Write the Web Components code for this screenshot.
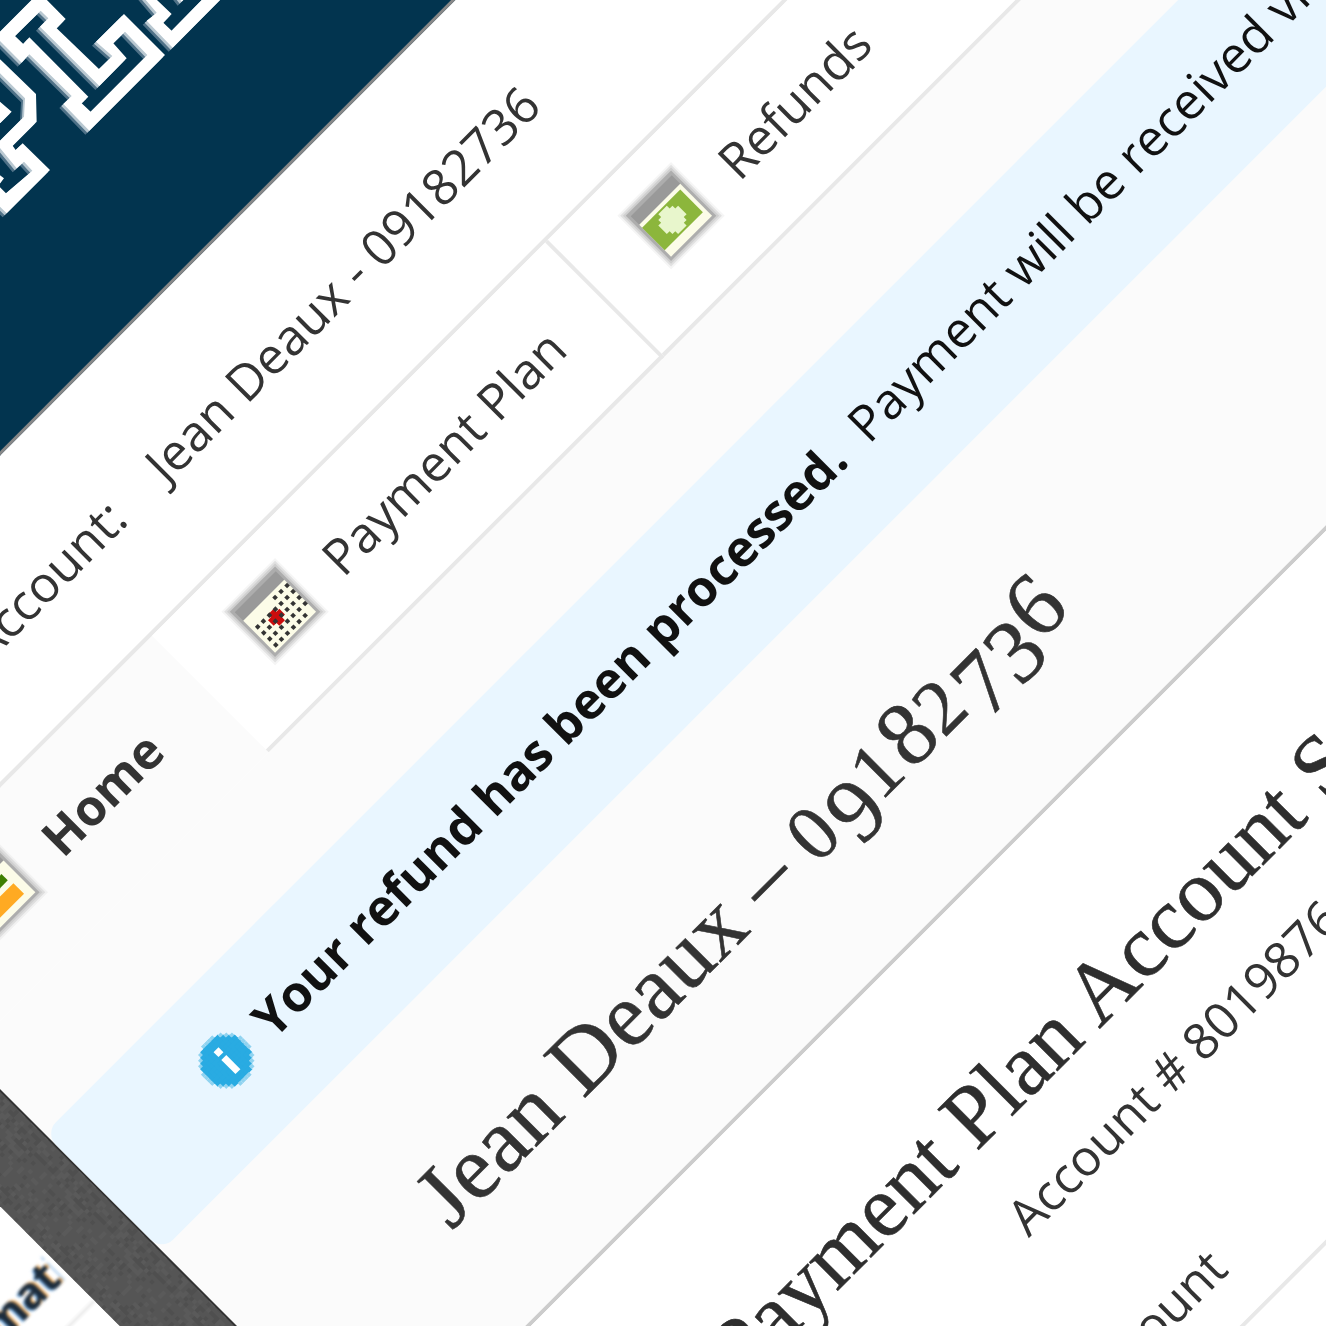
<!DOCTYPE html>
<html>
<head>
<meta charset="utf-8">
<title>Payment plan</title>
<style>
html, body { margin: 0; height: 100%; overflow: hidden; background: #fff; }
</style>
</head>
<body>
<plan-app>
  <side-nav slot="side">Information</side-nav>
  <site-header></site-header>
  <account-bar name="Jean Deaux - 09182736"></account-bar>
  <tab-bar>
    <tab-item icon="chart" active>Home</tab-item>
    <tab-item icon="calendar">Payment Plan</tab-item>
    <tab-item icon="money">Refunds</tab-item>
  </tab-bar>
  <plan-panel>
    <notice-box><b>Your refund has been processed.</b>  Payment will be received via</notice-box>
    <page-title>Jean Deaux – <span class="lo">0</span><span class="dn">9</span><span class="lo">1</span>8<span class="lo">2</span><span class="dn">7</span><span class="dn">3</span>6</page-title>
  </plan-panel>
  <summary-card></summary-card>
</plan-app>

<script>
const SANS = '"Open Sans", "Liberation Sans", sans-serif';
const SERIF = '"Liberation Serif", "DejaVu Serif", serif';

function shadow(el, html) {
    el.attachShadow({ mode: "open" }).innerHTML = html;
}

function rects(cells, size, fill) {
    return cells.map(c => `<rect x="${c[0]}" y="${c[1]}" width="${size}" height="${size}" fill="${fill}"/>`).join("");
}

class PlanApp extends HTMLElement {
    connectedCallback() {
        // everything below is laid out flat, the whole page is just turned 45deg
        shadow(this, `
            <style>
                :host { display: flex; position: absolute; left: 0; top: 0; width: 2200px; height: 2100px;
                        transform-origin: 0 0; transform: rotate(-45deg) translateX(-1100px);
                        font-family: ${SANS}; color: #333; }
                .band { flex: none; width: 85.5px; box-sizing: border-box; border-right: 4px solid #333; background: #555; overflow: hidden; }
                main { flex: 1; min-width: 0; margin-left: -2px; position: relative; }
            </style>
            <slot name="side"></slot>
            <div class="band">${this.noise()}</div>
            <main><slot></slot></main>
        `);
    }

    noise() {
        // the enlarged screenshot shows blocky grain in the dark strip
        let seed = 7, cells = "";
        for (let y = 0; y < 84; y += 4) {
            for (let x = 0; x < 84; x += 4) {
                seed = (seed * 16807) % 2147483647;
                const n = seed % 5;
                if (n === 0) cells += `<rect x="${x}" y="${y}" width="4" height="4" fill="#4f4f4f"/>`;
                if (n === 1) cells += `<rect x="${x}" y="${y}" width="4" height="4" fill="#5a5a5a"/>`;
            }
        }
        return `<svg width="84" height="2100" style="display:block"><defs><pattern id="grain" width="84" height="84" patternUnits="userSpaceOnUse">${cells}</pattern></defs><rect width="84" height="2100" fill="url(#grain)"/></svg>`;
    }
}

class SideNav extends HTMLElement {
    connectedCallback() {
        shadow(this, `
            <style>
                :host { display: block; flex: none; width: 246.5px; overflow: hidden; background: #fff; }
                .item { margin-top: 909px; padding: 0 0 26px 42px; height: 50px; line-height: 50px; font-size: 44px; font-weight: 700;
                        white-space: nowrap; color: #1c2c3c; border-bottom: 3px solid #e8e8e8;
                        text-shadow: 2px 0 1px #f3a64a, -2px 0 1px #6aa6e0; filter: blur(1.4px); }
                .clip { width: 199px; overflow: hidden; }
            </style>
            <div class="item"><div class="clip"><slot></slot></div></div>
        `);
    }
}

class SiteHeader extends HTMLElement {
    connectedCallback() {
        const shapes = [
            // L
            [[-14,109],[118,-23],[197,57],[170,85],[297,207],[337,168],[288,125],[372,42],[495,165],[268,392],[190,312],[215,288],[88,163],[65,188]],
            [[45,108],[122,32],[145,55],[120,80],[298,258],[380,175],[340,130],[375,95],[442,165],[272,335],[245,310],[265,290],[88,112],[70,132]],
            // P
            [[-60,125],[5,182],[108,282],[110,365],[38,437],[47,450],[68,430],[150,510],[20,640],[-80,540],[-80,140]],
            [[-60,160],[75,295],[72,350],[-10,432],[50,505],[72,485],[97,512],[18,580],[-5,557],[12,535],[-60,480]],
            [[0,305],[35,335],[-5,375],[-40,340]],
            // A
            [[420,-20],[470,38],[440,62],[518,143],[680,-20],[625,-20],[515,92],[490,68],[515,42],[450,-20]],
            [[525,-20],[545,5],[570,-20]],
        ];
        const d = shapes.map(s => "M" + s.map(p => p.join(" ")).join("L") + "Z").join("");
        shadow(this, `
            <style>
                :host { display: block; position: relative; height: 319px; background: #02344f; border-bottom: 3px solid #888; }
                svg { position: absolute; left: 770px; top: 0; width: 1px; height: 1px; overflow: visible; }
            </style>
            <svg aria-label="logo">
                <g transform="rotate(45) scale(.33333)" fill-rule="evenodd">
                    <path d="${d}" fill="#4f7187" transform="translate(-12 12)"/>
                    <path d="${d}" fill="#b9c8d1" transform="translate(-6 6)"/>
                    <path d="${d}" fill="#fff"/>
                </g>
            </svg>
        `);
    }
}

class AccountBar extends HTMLElement {
    connectedCallback() {
        shadow(this, `
            <style>
                :host { display: flex; height: 141px; padding: 90px 0 0 291px; background: #fff; font-size: 50px; line-height: 60px; white-space: nowrap; }
                span { margin-right: 52px; }
            </style>
            <span>Account:</span>${this.getAttribute("name")}
        `);
    }
}

class TabBar extends HTMLElement {
    connectedCallback() {
        shadow(this, `
            <style>
                :host { display: flex; padding-left: 31px; background: #fbfbfb; border-top: 4px solid #e8e8e8; }
            </style>
            <slot></slot>
        `);
    }
}

class PlanIcon extends HTMLElement {
    connectedCallback() {
        const type = this.getAttribute("type");
        let inner = "";
        if (type === "calendar") {
            const rows = [[-10, [10, 18.5, 27]], [-1.5, [-23, -15, -6.5, 2, 10, 18.5, 27]], [7, [-23, -15, -6.5, 2, 10, 18.5, 27]],
                [15.5, [-23, -15, -6.5, 2, 10, 18.5, 27]], [24, [-23, -15, -6.5, 2, 10, 18.5]]];
            const dots = [];
            rows.forEach(r => r[1].forEach(u => dots.push([u + 34, r[0] + 34])));
            inner = `<path d="M25 37h4v-4h8v4h4v8h-4v4h-8v-4h-4z" fill="#cc0c0c"/>` + rects(dots, 4, "#333");
        } else if (type === "money") {
            inner = `<rect x="7" y="24" width="54" height="32" fill="#8cb63c"/>
                <path d="M28 26h12v4h4v4h4v12h-4v4h-4v4h-12v-4h-4v-4h-4v-12h4v-4h4z" fill="#e8f6cc"/>`;
        } else if (type === "chart") {
            inner = `<rect x="8" y="28" width="46" height="9" fill="#3f7f00"/><rect x="11" y="43" width="45" height="15" fill="#ffaa22"/>`;
        }
        shadow(this, `
            <style>:host { display: block; flex: none; width: 72px; height: 72px; margin-top: -12px; } svg { display: block; overflow: visible; }</style>
            <svg width="72" height="72" viewBox="0 0 72 72">
                <rect x="-2" y="-2" width="76" height="76" fill="#000" opacity=".04"/>
                <rect width="72" height="72" fill="#000" opacity=".08"/>
                <rect x="2" y="2" width="68" height="68" fill="#cfcfcf"/>
                <rect x="4" y="4" width="64" height="64" fill="#adadad"/>
                <rect x="7" y="8" width="58" height="12" fill="#999"/>
                <rect x="7" y="20" width="58" height="45" fill="#fcfce8"/>
                ${inner}
            </svg>
        `);
    }
}

class TabItem extends HTMLElement {
    connectedCallback() {
        shadow(this, `
            <style>
                :host { display: flex; align-items: center; height: 60px; padding: 46px 60px 55px 68px; gap: 36px; font-size: 50px; line-height: 60px;
                        white-space: nowrap; background: #fff; border-right: 4px solid #e8e8e8; border-bottom: 4px solid #e8e8e8; }
                :host([active]) { padding-right: 69px; background: transparent; border-bottom-color: transparent; border-right-color: transparent; font-weight: 700; }
                :host(:last-child) { border-right: 0; flex: 1; }
            </style>
            <plan-icon type="${this.getAttribute("icon")}"></plan-icon>
            <slot></slot>
        `);
    }
}

class PlanPanel extends HTMLElement {
    connectedCallback() {
        shadow(this, `
            <style>
                :host { display: block; height: 476px; padding-top: 111px; background: #fbfbfb; border-bottom: 4px solid #ccc; }
            </style>
            <slot></slot>
        `);
    }
}

class InfoIcon extends HTMLElement {
    connectedCallback() {
        // round icon drawn on a coarse grid, it is an upscaled 14px bitmap in the screenshot
        let cells = "";
        for (let y = 0; y < 14; y++) {
            for (let x = 0; x < 14; x++) {
                const d = Math.hypot(x - 6.5, y - 6.5);
                if (d >= 6.1 && d < 6.9) cells += `<rect x="${x * 4}" y="${y * 4}" width="4" height="4" fill="#90d3f0"/>`;
                if (d < 6.1) cells += `<rect x="${x * 4 - .5}" y="${y * 4 - .5}" width="5" height="5" fill="#29abe2"/>`;
            }
        }
        shadow(this, `
            <style>:host { display: block; flex: none; width: 56px; height: 56px; } svg { display: block; }</style>
            <svg width="56" height="56" viewBox="0 0 56 56">${cells}
                <rect x="25" y="13" width="7" height="7" fill="#fff"/>
                <rect x="25" y="24" width="7" height="20" fill="#fff"/>
            </svg>
        `);
    }
}

class NoticeBox extends HTMLElement {
    connectedCallback() {
        shadow(this, `
            <style>
                :host { display: flex; align-items: center; gap: 20px; height: 60px; padding: 47px 0 59px 152px; border-radius: 16px 0 0 16px;
                        background: #e9f6ff; color: #111; font-size: 50px; line-height: 60px; white-space: nowrap; }
                div { white-space: pre; }
            </style>
            <info-icon></info-icon>
            <div><slot></slot></div>
        `);
    }
}

class PageTitle extends HTMLElement {
    connectedCallback() {
        shadow(this, `
            <style>
                :host { display: block; margin-top: 111px; padding-left: 219px; font: 91px/100px ${SERIF}; letter-spacing: .3px; white-space: nowrap; color: #333; -webkit-text-stroke: .6px #333; }
                ::slotted(.lo) { font-size: .86em; letter-spacing: .06em; }
                ::slotted(.dn) { position: relative; top: .2em; }
            </style>
            <slot></slot>
        `);
    }
}

class SummaryCard extends HTMLElement {
    connectedCallback() {
        shadow(this, `
            <style>
                :host { display: block; background: #fff; padding-top: 113px; white-space: nowrap; }
                h2 { margin: 0 0 28px 316px; font: 400 88px/100px ${SERIF}; color: #2e2e2e; -webkit-text-stroke: .6px #2e2e2e; }
                p { margin: 0 0 106px 622px; font-size: 50px; line-height: 60px; }
                .row { padding: 0 0 34px 552px; font-size: 50px; line-height: 60px; border-bottom: 4px solid #e8e8e8; }
            </style>
            <h2>Payment Plan Account Summary</h2>
            <p>Account # 8019876</p>
            <div class="row">Account</div>
        `);
    }
}

customElements.define("plan-app", PlanApp);
customElements.define("side-nav", SideNav);
customElements.define("site-header", SiteHeader);
customElements.define("account-bar", AccountBar);
customElements.define("tab-bar", TabBar);
customElements.define("plan-icon", PlanIcon);
customElements.define("tab-item", TabItem);
customElements.define("plan-panel", PlanPanel);
customElements.define("info-icon", InfoIcon);
customElements.define("notice-box", NoticeBox);
customElements.define("page-title", PageTitle);
customElements.define("summary-card", SummaryCard);
</script>
</body>
</html>
